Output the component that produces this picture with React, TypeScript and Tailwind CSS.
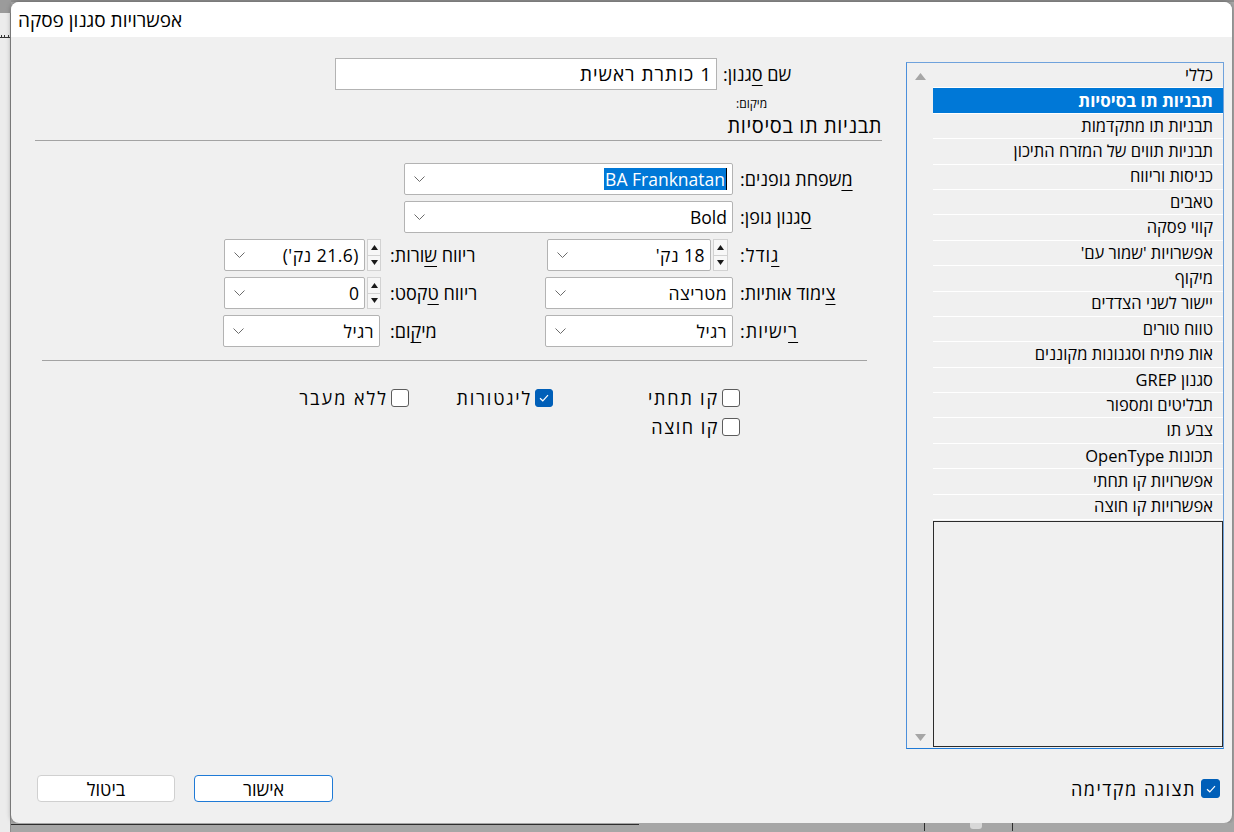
import React from "react";

const Chevron = () => (
  <svg width="11" height="6" viewBox="0 0 11 6" className="shrink-0">
    <polyline points="0.5,0.5 5.5,5.5 10.5,0.5" fill="none" stroke="#6b6b6b" strokeWidth="1" />
  </svg>
);

const Spinner = ({ w }: { w: string }) => (
  <div className={`${w} h-[32px] flex flex-col bg-[#f7f7f7] border border-[#d2d2d2] shrink-0`}>
    <div className="flex-1 flex items-center justify-center border-b border-[#d2d2d2]">
      <svg width="7" height="5" viewBox="0 0 7 5">
        <polygon points="3.5,0 7,5 0,5" fill="#1a1a1a" />
      </svg>
    </div>
    <div className="flex-1 flex items-center justify-center">
      <svg width="7" height="5" viewBox="0 0 7 5">
        <polygon points="0,0 7,0 3.5,5" fill="#1a1a1a" />
      </svg>
    </div>
  </div>
);

const Combo = ({ w, children }: { w: string; children: React.ReactNode }) => (
  <div
    className={`${w} h-[32px] bg-white border border-[#b3b3b3] rounded-[2px] flex items-center justify-between pl-[9px] pr-[5px] shrink-0`}
  >
    <Chevron />
    {children}
  </div>
);

const Label = ({ children, className }: { children: React.ReactNode; className: string }) => (
  <span dir="rtl" className={`text-[18px] leading-[22px] whitespace-nowrap ${className}`}>
    {children}
  </span>
);

const U = ({ children }: { children: React.ReactNode }) => <span className="underline underline-offset-[4px]">{children}</span>;

const Check = ({ checked, size }: { checked?: boolean; size: string }) => (
  <div
    className={`${size} rounded-[3px] shrink-0 flex items-center justify-center ${
      checked ? "bg-[#005fb8] border border-[#005fb8]" : "bg-white border border-[#5c5c5c]"
    }`}
  >
    {checked && (
      <svg width="12" height="10" viewBox="0 0 12 10">
        <polyline points="2,5.2 4.8,7.8 10,2.2" fill="none" stroke="white" strokeWidth="1.2" />
      </svg>
    )}
  </div>
);

const items = [
  "כללי",
  "תבניות תו בסיסיות",
  "תבניות תו מתקדמות",
  "תבניות תווים של המזרח התיכון",
  "כניסות וריווח",
  "טאבים",
  "קווי פסקה",
  "אפשרויות 'שמור עם'",
  "מיקוף",
  "יישור לשני הצדדים",
  "טווח טורים",
  "אות פתיח וסגנונות מקוננים",
  "סגנון GREP",
  "תבליטים ומספור",
  "צבע תו",
  "תכונות OpenType",
  "אפשרויות קו תחתי",
  "אפשרויות קו חוצה",
];

const V = "text-[17.5px] leading-[22px]";
const VH = "text-[17.5px] leading-[22px] tracking-[0.5px]";

export default function App() {
  return (
    <div className="w-[1234px] h-[832px] overflow-hidden flex bg-[#a9a9a9] font-['Open_Sans','Liberation_Sans',sans-serif] text-black">
      {/* left backdrop strip */}
      <div className="w-[11px] h-full flex flex-col shrink-0">
        <div className="h-[13px] bg-[#9b9b9b]" />
        <div className="flex-1 bg-[#ececec] border-r border-[#8d8d8d] flex flex-col">
          <div className="mt-[22px] h-[3px] border-b border-[#333] flex justify-around items-start">
            <div className="w-px h-[3px] bg-[#333]" />
            <div className="w-px h-[3px] bg-[#333]" />
            <div className="w-px h-[3px] bg-[#333]" />
          </div>
        </div>
      </div>

      <div className="w-[1223px] flex flex-col shrink-0">
        <div className="h-[2px] bg-[#8f8f8f] shrink-0" />
        {/* dialog */}
        <div className="w-[1221px] h-[821px] shrink-0 bg-[#f0f0f0] rounded-[8px] shadow-[0_0_5px_rgba(0,0,0,0.35)] flex flex-col overflow-hidden">
          {/* title bar */}
          <div className="h-[35px] bg-white flex items-center pl-[7px] shrink-0">
            <span dir="rtl" className="text-[19px] leading-[24px] text-black">
              אפשרויות סגנון פסקה
            </span>
          </div>

          {/* body */}
          <div className="flex-1 flex flex-col pt-[21px]">
            <div className="flex">
              {/* form column */}
              <div className="w-[895px] shrink-0 flex flex-col">
                <div className="h-[32px] flex items-center pl-[324px]">
                  <div className="w-[382px] h-[32px] bg-white border border-[#b3b3b3] flex items-center justify-end pr-[4px]">
                    <span dir="rtl" className="text-[19px] leading-[22px] tracking-[1px]">
                      1 כותרת ראשית
                    </span>
                  </div>
                  <Label className="ml-[6px]">
                    שם <U>ס</U>גנון:
                  </Label>
                </div>

                <div className="mt-[7px] pl-[725px] h-[14px] flex">
                  <span dir="rtl" className="text-[12px] leading-[14px]">
                    מיקום:
                  </span>
                </div>

                <div dir="rtl" className="mt-[4px] pr-[24px] text-right text-[20px] leading-[22px] tracking-[0.6px]">
                  תבניות תו בסיסיות
                </div>

                <div className="mt-[3px] mx-[24px] border-t border-[#a3a3a3]" />

                <div className="mt-[22px] flex flex-col gap-[6px]">
                  <div className="flex items-center pl-[393px]">
                    <Combo w="w-[329px]">
                      <span className="flex items-center">
                        <span className={`bg-[#0078d7] text-white ${V} px-[1px]`}>BA Franknatan</span>
                        <span className="w-px h-[22px] bg-black" />
                      </span>
                    </Combo>
                    <Label className="ml-[7px]">
                      <U>מ</U>שפחת גופנים:
                    </Label>
                  </div>

                  <div className="flex items-center pl-[393px]">
                    <Combo w="w-[329px]">
                      <span className={V}>Bold</span>
                    </Combo>
                    <Label className="ml-[7px]">
                      <U>ס</U>גנון גופן:
                    </Label>
                  </div>

                  <div className="flex items-center pl-[212px]">
                    <div className="w-[322px] flex items-center shrink-0">
                      <div className="ml-[1px]">
                        <Combo w="w-[141px]">
                          <span dir="rtl" className={VH}>(21.6 נק')</span>
                        </Combo>
                      </div>
                      <div className="ml-[2px]">
                        <Spinner w="w-[14px]" />
                      </div>
                      <Label className="ml-[9px]">
                        ריווח <U>ש</U>ורות:
                      </Label>
                    </div>
                    <div className="flex items-center">
                      <div className="ml-[2px]">
                        <Combo w="w-[164px]">
                          <span dir="rtl" className={VH}>18 נק'</span>
                        </Combo>
                      </div>
                      <div className="ml-[2px]">
                        <Spinner w="w-[15px]" />
                      </div>
                      <Label className="ml-[12px] tracking-[1px]">
                        <U>ג</U>ודל:
                      </Label>
                    </div>
                  </div>

                  <div className="flex items-center pl-[212px]">
                    <div className="w-[322px] flex items-center shrink-0">
                      <div className="ml-[1px]">
                        <Combo w="w-[141px]">
                          <span className={V}>0</span>
                        </Combo>
                      </div>
                      <div className="ml-[2px]">
                        <Spinner w="w-[14px]" />
                      </div>
                      <Label className="ml-[9px]">
                        ריווח <U>ט</U>קסט:
                      </Label>
                    </div>
                    <div className="flex items-center">
                      <Combo w="w-[188px]">
                        <span dir="rtl" className={VH}>מטריצה</span>
                      </Combo>
                      <Label className="ml-[7px]">
                        <U>צ</U>ימוד אותיות:
                      </Label>
                    </div>
                  </div>

                  <div className="flex items-center pl-[212px]">
                    <div className="w-[322px] flex items-center shrink-0">
                      <Combo w="w-[157px]">
                        <span dir="rtl" className={VH}>רגיל</span>
                      </Combo>
                      <Label className="ml-[10px]">
                        מי<U>ק</U>ום:
                      </Label>
                    </div>
                    <div className="flex items-center">
                      <Combo w="w-[188px]">
                        <span dir="rtl" className={VH}>רגיל</span>
                      </Combo>
                      <Label className="ml-[7px] tracking-[1px]">
                        <U>ר</U>ישיות:
                      </Label>
                    </div>
                  </div>
                </div>

                <div className="mt-[13px] ml-[31px] w-[825px] border-t border-[#a3a3a3]" />

                <div className="mt-[28px] h-[18px] flex items-center pl-[269px]">
                  <div className="w-[129px] flex items-center justify-end gap-[3px]">
                    <Label className="tracking-[2px]">ללא מעבר</Label>
                    <Check size="w-[18px] h-[18px]" />
                  </div>
                  <div className="w-[144px] flex items-center justify-end gap-[3px]">
                    <Label className="tracking-[1.8px]">ליגטורות</Label>
                    <Check checked size="w-[18px] h-[18px]" />
                  </div>
                  <div className="w-[187px] flex items-center justify-end gap-[3px]">
                    <Label className="tracking-[1.8px]">קו תחתי</Label>
                    <Check size="w-[18px] h-[18px]" />
                  </div>
                </div>
                <div className="mt-[11px] h-[18px] flex items-center pl-[542px]">
                  <div className="w-[187px] flex items-center justify-end gap-[3px]">
                    <Label className="tracking-[1.5px]">קו חוצה</Label>
                    <Check size="w-[18px] h-[18px]" />
                  </div>
                </div>
              </div>

              {/* list column */}
              <div className="mt-[4px] w-[318px] h-[687px] mr-[8px] shrink-0 border border-[#6fa2dc] border-b-[#1f7ad6] border-l-[#4b8fdb] flex">
                <div className="w-[26px] shrink-0 flex flex-col items-center justify-between pt-[10px] pb-[7px]">
                  <svg width="11" height="7" viewBox="0 0 11 7">
                    <polygon points="5.5,0 11,7 0,7" fill="#a6a6a6" />
                  </svg>
                  <svg width="11" height="7" viewBox="0 0 11 7">
                    <polygon points="0,0 11,0 5.5,7" fill="#a6a6a6" />
                  </svg>
                </div>
                <div className="flex-1 flex flex-col">
                  {items.map((t, i) => (
                    <div
                      key={t}
                      dir="rtl"
                      className={`h-[25.4px] shrink-0 border-b border-white flex items-center pr-[10px] whitespace-nowrap ${
                        i === 1 ? "bg-[#0078d7] text-white font-bold text-[17px]" : "text-black text-[16.5px]"
                      }`}
                    >
                      {t}
                    </div>
                  ))}
                  <div className="flex-1 mt-[1px] mb-[1px] border border-[#2b2b2b]" />
                </div>
              </div>
            </div>

            {/* bottom bar */}
            <div className="mt-auto mb-[21px] h-[27px] flex items-center justify-between pl-[26px] pr-[12px]">
              <div className="flex items-center gap-[19px]">
                <div className="w-[138px] h-[27px] bg-white border border-[#d0d0d0] rounded-[4px] flex items-center justify-center">
                  <span dir="rtl" className="text-[18px] leading-[22px]">ביטול</span>
                </div>
                <div className="w-[139px] h-[27px] bg-white border-[1.5px] border-[#1f7ad6] rounded-[4px] flex items-center justify-center">
                  <span dir="rtl" className="text-[18px] leading-[22px]">אישור</span>
                </div>
              </div>
              <div className="flex items-center gap-[5px]">
                <Label className="tracking-[1.5px]">תצוגה מקדימה</Label>
                <Check checked size="w-[19px] h-[19px]" />
              </div>
            </div>
          </div>
        </div>

        {/* bottom backdrop */}
        <div className="flex-1 bg-[#a6a6a6] flex items-start">
          <div className="mt-[1px] w-[628px] h-px bg-[#2e2e2e]" />
          <div className="ml-[285px] w-px h-[8px] bg-[#2e2e2e]" />
          <div className="ml-[45px] w-[12px] h-[6px] bg-[#d8d8d8] rounded-b-[3px]" />
          <div className="ml-[30px] w-px h-[8px] bg-[#2e2e2e]" />
        </div>
      </div>
    </div>
  );
}
